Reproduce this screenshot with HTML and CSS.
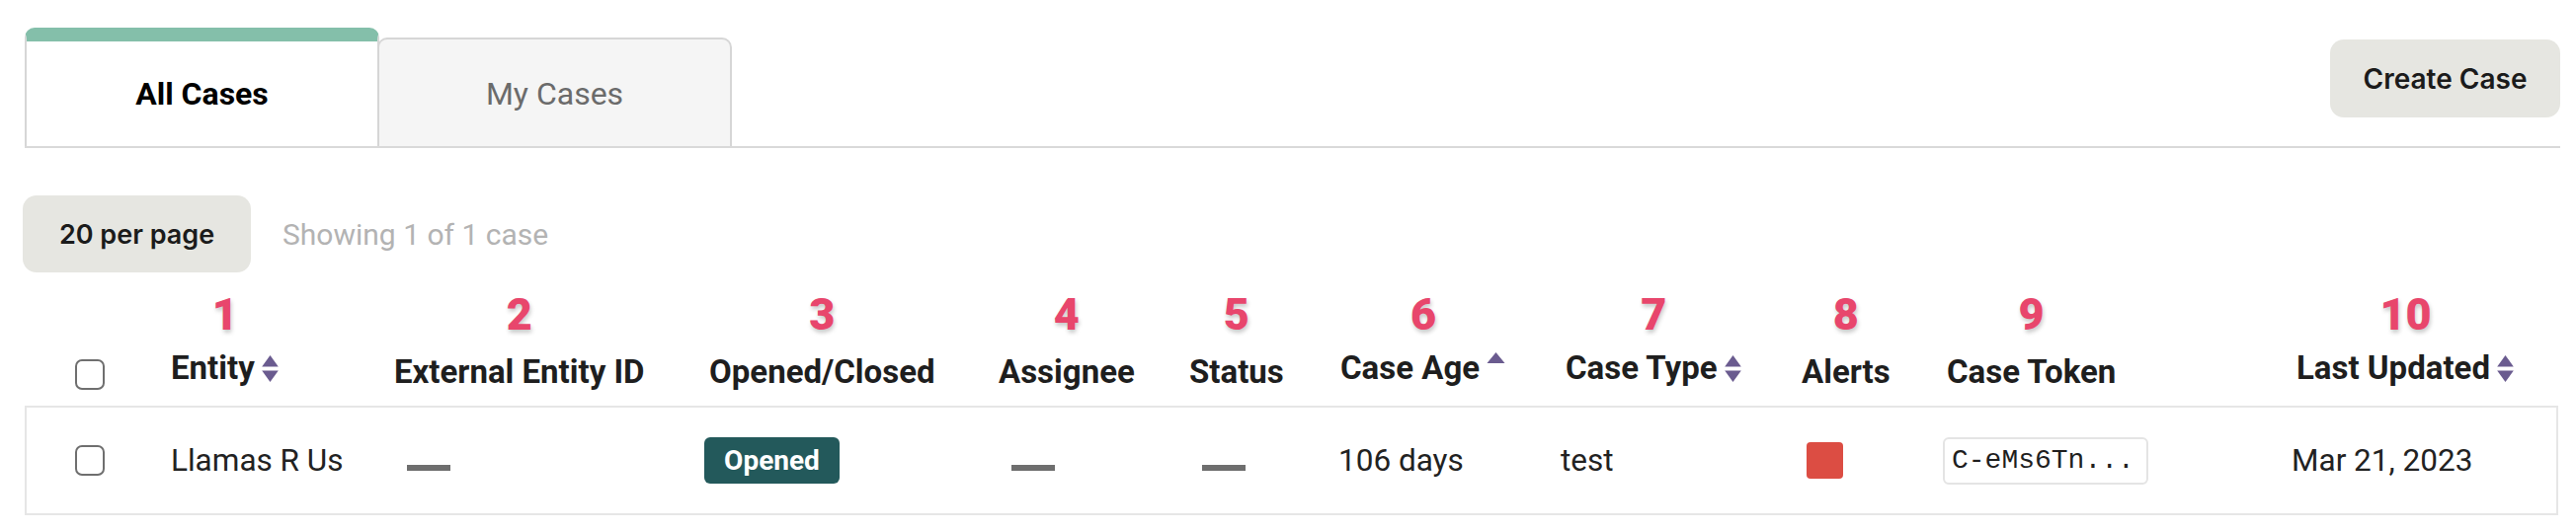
FILE: index.html
```html
<!DOCTYPE html>
<html lang="en">
<head>
<meta charset="utf-8">
<title>Cases</title>
<link rel="stylesheet" href="styles.css">
</head>
<body>
<div class="page">
  <div class="tabbar">
    <div class="tab tab-active">All Cases</div>
    <div class="tab tab-idle">My Cases</div>
    <button class="btn btn-create">Create Case</button>
  </div>

  <div class="toolbar">
    <button class="btn btn-perpage">20 per page</button>
    <span class="showing">Showing 1 of 1 case</span>
  </div>

  <div class="grid head">
    <div class="cell cell-check"><span class="checkbox"></span></div>
    <div class="cell"><div class="hwrap"><span class="num">1</span><span class="hlabel hlabel-sort">Entity<svg class="sort" viewBox="0 0 18 28"><path d="M9 1 L17 12 H1 Z"/><path d="M1 16 H17 L9 27 Z"/></svg></span></div></div>
    <div class="cell"><div class="hwrap"><span class="num">2</span><span class="hlabel">External Entity ID</span></div></div>
    <div class="cell"><div class="hwrap pad5"><span class="num">3</span><span class="hlabel">Opened/Closed</span></div></div>
    <div class="cell"><div class="hwrap"><span class="num">4</span><span class="hlabel">Assignee</span></div></div>
    <div class="cell"><div class="hwrap"><span class="num">5</span><span class="hlabel">Status</span></div></div>
    <div class="cell"><div class="hwrap pad2"><span class="num">6</span><span class="hlabel hlabel-sort">Case Age<svg class="sort sort-up" viewBox="0 0 20 13"><path d="M10 1 L19 12 H1 Z"/></svg></span></div></div>
    <div class="cell"><div class="hwrap pad5"><span class="num">7</span><span class="hlabel hlabel-sort">Case Type<svg class="sort" viewBox="0 0 18 28"><path d="M9 1 L17 12 H1 Z"/><path d="M1 16 H17 L9 27 Z"/></svg></span></div></div>
    <div class="cell"><div class="hwrap"><span class="num">8</span><span class="hlabel">Alerts</span></div></div>
    <div class="cell"><div class="hwrap pad4"><span class="num">9</span><span class="hlabel">Case Token</span></div></div>
    <div class="cell"><div class="hwrap pad5"><span class="num">10</span><span class="hlabel hlabel-sort">Last Updated<svg class="sort" viewBox="0 0 18 28"><path d="M9 1 L17 12 H1 Z"/><path d="M1 16 H17 L9 27 Z"/></svg></span></div></div>
  </div>

  <div class="grid row">
    <div class="cell cell-check"><span class="checkbox"></span></div>
    <div class="cell">Llamas R Us</div>
    <div class="cell"><span class="dash"></span></div>
    <div class="cell"><span class="badge">Opened</span></div>
    <div class="cell"><span class="dash"></span></div>
    <div class="cell"><span class="dash"></span></div>
    <div class="cell">106 days</div>
    <div class="cell">test</div>
    <div class="cell"><span class="alert"></span></div>
    <div class="cell"><span class="token">C-eMs6Tn...</span></div>
    <div class="cell">Mar 21, 2023</div>
  </div>
</div>
</body>
</html>
```

FILE: styles.css
```css
* { box-sizing: border-box; }

html, body {
  margin: 0;
  background: #ffffff;
}

body {
  font-family: Roboto, "Liberation Sans", Arial, sans-serif;
  color: #222222;
}

.page {
  padding: 28px 16px 0 25px;
}

/* ---------- tabs ---------- */
.tabbar {
  display: flex;
  align-items: flex-end;
  border-bottom: 2px solid #d9d9d9;
  height: 122px;
}

.tab {
  width: 359px;
  display: flex;
  align-items: center;
  justify-content: center;
  font-size: 32px;
  border: 2px solid #d6d6d6;
  border-bottom: none;
  border-radius: 10px 10px 0 0;
}

.tab-active {
  height: 120px;
  border-top: 14px solid #84bfaa;
  font-weight: 700;
  color: #000000;
  background: #ffffff;
  position: relative;
  z-index: 1;
}

.tab-idle {
  height: 110px;
  margin-left: -2px;
  background: #f5f5f5;
  color: #6b6b6b;
  font-weight: 400;
  padding-top: 2px;
}

.btn {
  border: none;
  background: #e6e6e1;
  color: #1b1b1b;
  font-family: Inter, Roboto, sans-serif;
  font-weight: 600;
  font-size: 28px;
  border-radius: 14px;
  cursor: pointer;
}

.btn-create {
  margin-left: auto;
  align-self: flex-start;
  margin-top: 12px;
  width: 233px;
  height: 79px;
}

/* ---------- toolbar ---------- */
.toolbar {
  display: flex;
  align-items: center;
  margin-top: 48px;
}

.btn-perpage {
  width: 231px;
  height: 78px;
  margin-left: -2px;
  font-size: 27px;
}

.showing {
  margin-left: 32px;
  font-size: 30px;
  color: #b3b3b3;
}

/* ---------- grid ---------- */
.grid {
  display: grid;
  grid-template-columns: 97px 226px 314px 298px 193px 151px 225px 244px 143px 353px 1fr;
}

.head {
  padding: 20px 0 15px 51px;
  align-items: end;
}

.hwrap {
  display: inline-flex;
  flex-direction: column;
  align-items: center;
}

.pad2 { margin-left: 2px; }
.pad4 { margin-left: 4px; }
.pad5 { margin-left: 5px; }

.num {
  font-family: Roboto, sans-serif;
  font-weight: 900;
  font-size: 45px;
  line-height: 46px;
  color: #e8466c;
  -webkit-text-stroke: 8px #ffffff;
  paint-order: stroke fill;
  text-shadow: 1px 3px 4px rgba(0, 0, 0, 0.22);
  margin-bottom: 16px;
}

.hlabel {
  display: inline-flex;
  align-items: center;
  font-size: 33px;
  font-weight: 700;
  line-height: 38px;
  color: #1e1e1e;
}

.hlabel-sort {
  margin-top: -4px;
  margin-bottom: 4px;
}

.sort {
  width: 19px;
  height: 29px;
  margin-left: 6px;
  fill: #6a5b8f;
}

.sort-up {
  width: 21px;
  height: 13px;
  align-self: flex-start;
  margin-top: 2px;
}

.cell-check {
  display: flex;
  align-items: center;
}

.head .cell-check {
  padding-bottom: 1px;
}

.checkbox {
  display: block;
  width: 30px;
  height: 31px;
  border: 2px solid #6f6f6f;
  border-radius: 7px;
  background: #ffffff;
}

.row {
  height: 111px;
  border: 2px solid #e6e6e6;
  padding-left: 49px;
  margin-right: 2px;
  align-items: center;
  font-size: 31.5px;
  color: #222222;
}

.row .cell {
  display: flex;
  align-items: center;
}

.dash {
  display: block;
  width: 44px;
  height: 6px;
  background: #6e6e6e;
  margin-left: 13px;
  margin-top: 14px;
}

.badge {
  display: inline-flex;
  align-items: center;
  justify-content: center;
  width: 137px;
  height: 47px;
  background: #23595b;
  color: #ffffff;
  font-weight: 700;
  font-size: 28px;
  border-radius: 6px;
}

.alert {
  display: block;
  width: 37px;
  height: 37px;
  background: #dc4d43;
  border-radius: 4px;
  margin-left: 5px;
}

.token {
  display: inline-flex;
  align-items: center;
  width: 208px;
  height: 48px;
  padding-left: 7px;
  border: 2px solid #e4e4e4;
  border-radius: 6px;
  font-family: "Liberation Mono", "DejaVu Sans Mono", monospace;
  font-size: 28px;
  color: #1f1f1f;
}
```
